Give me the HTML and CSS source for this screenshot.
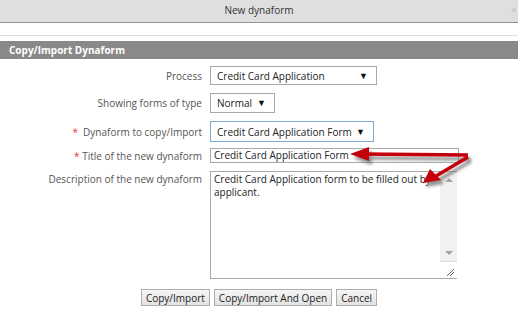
FILE: index.html
```html
<!DOCTYPE html>
<html lang="en">
<head>
  <meta charset="UTF-8" />
  <title>New dynaform</title>
  <link rel="stylesheet" href="styles.css">
</head>
<body>
  <div class="window">
    <div class="titlebar">
      New dynaform
      <span class="close">×</span>
    </div>
    <div class="spacer"></div>
    <div class="section-title">Copy/Import Dynaform</div>

    <div class="form">
      <div class="row row-process">
        <label class="label">Process</label>
        <div class="select select-process">
          <span>Credit Card Application</span>
          <span class="caret">▼</span>
        </div>
      </div>

      <div class="row row-type">
        <label class="label">Showing forms of type</label>
        <div class="select select-type">
          <span>Normal</span>
          <span class="caret">▼</span>
        </div>
      </div>

      <div class="row row-dyna">
        <label class="label"><span class="req">*</span>&nbsp; Dynaform to copy/Import</label>
        <div class="select select-dyna focus">
          <span>Credit Card Application Form</span>
          <span class="caret">▼</span>
        </div>
      </div>

      <div class="row row-title">
        <label class="label"><span class="req">*</span> Title of the new dynaform</label>
        <div class="input">Credit Card Application Form</div>
      </div>

      <div class="row row-desc">
        <label class="label">Description of the new dynaform</label>
        <div class="textarea">
          <div class="textarea-text">Credit Card Application form to be filled out by applicant.</div>
          <div class="scrollbar">
            <span class="arrow-up"></span>
            <span class="arrow-down"></span>
            <span class="grip">
              <svg width="17" height="17" viewBox="0 0 17 17">
                <path d="M7 14 L14 7 M10 14 L14 10" stroke="#666" stroke-width="1" fill="none"/>
              </svg>
            </span>
          </div>
        </div>
      </div>

      <div class="actions">
        <button>Copy/Import</button>
        <button>Copy/Import And Open</button>
        <button>Cancel</button>
      </div>
    </div>

    <svg class="callouts" width="518" height="309" viewBox="0 0 518 309">
      <defs>
        <filter id="shadow" x="-20%" y="-50%" width="140%" height="200%">
          <feGaussianBlur stdDeviation="1.6"/>
        </filter>
      </defs>
      <g fill="#7a7a7a" stroke="#7a7a7a" filter="url(#shadow)" opacity="0.8" transform="translate(3,4)">
        <line x1="468" y1="155" x2="362" y2="154" stroke-width="3.5"/>
        <polygon points="350,154 369,147 369,161" stroke="none"/>
        <line x1="468" y1="157" x2="436" y2="176" stroke-width="3.5"/>
        <polygon points="423,183 430,169 441,180" stroke="none"/>
      </g>
      <g fill="#c4000a" stroke="#c4000a">
        <line x1="468" y1="155" x2="362" y2="154" stroke-width="3.5"/>
        <polygon points="350,154 369,147 369,161" stroke="none"/>
        <line x1="468" y1="157" x2="436" y2="176" stroke-width="3.5"/>
        <polygon points="423,183 430,169 441,180" stroke="none"/>
      </g>
    </svg>
  </div>
</body>
</html>
```

FILE: styles.css
```css
body {
  margin: 0;
  font-family: "Open Sans", "Liberation Sans", sans-serif;
  font-size: 10px;
  color: #555;
  background: #fff;
}
.window {
  position: relative;
  width: 518px;
  height: 309px;
  overflow: hidden;
}
.titlebar {
  position: relative;
  height: 22px;
  line-height: 21px;
  background: #dfdfdf;
  border-bottom: 1px solid #8f9596;
  text-align: center;
  color: #333;
}
.close {
  position: absolute;
  right: 1px;
  top: 0;
  color: #c0c0c0;
  font-size: 10px;
}
.spacer {
  height: 12px;
  border-bottom: 1px solid #dcdcdc;
  margin-bottom: 5px;
}
.section-title {
  height: 18px;
  line-height: 18px;
  background: #898989;
  color: #fff;
  font-weight: bold;
  padding-left: 9px;
}
.form {
  display: flex;
  flex-direction: column;
}
.row {
  display: flex;
  align-items: center;
  column-gap: 8px;
  line-height: 14px;
}
.label {
  width: 202px;
  flex: none;
  text-align: right;
}
.req {
  color: #e23a3a;
}
.row-process { margin-top: 7px; }
.row-type { margin-top: 8px; }
.row-dyna { margin-top: 8px; }
.row-title { margin-top: 6px; }
.row-desc { margin-top: 8px; align-items: flex-start; }
.row-desc .label { padding-top: 1px; }

.select {
  display: flex;
  align-items: center;
  justify-content: space-between;
  box-sizing: border-box;
  height: 19px;
  padding: 0 8px 0 6px;
  border: 1px solid #a9a9a9;
  background: #fff;
  color: #222;
  white-space: nowrap;
}
.select-process { width: 167px; }
.select-type { width: 65px; height: 20px; }
.select-dyna { width: 164px; height: 21px; }
.focus {
  border-color: #7fa7d8;
}
.caret {
  font-size: 9px;
  color: #111;
}
.input {
  box-sizing: border-box;
  width: 249px;
  height: 15px;
  line-height: 13px;
  padding-left: 3px;
  border: 1px solid #a9a9a9;
  color: #222;
}
.textarea {
  display: flex;
  box-sizing: border-box;
  width: 247px;
  height: 108px;
  border: 1px solid #a9a9a9;
  border-right: none;
}
.textarea-text {
  flex: 1;
  padding: 1px 3px;
  color: #222;
  line-height: 13px;
}
.scrollbar {
  position: relative;
  width: 17px;
  background: #f1f1f1;
  display: flex;
  flex-direction: column;
  align-items: center;
}
.arrow-up,
.arrow-down {
  width: 0;
  height: 0;
  border-left: 4px solid transparent;
  border-right: 4px solid transparent;
}
.arrow-up {
  margin-top: 6px;
  border-bottom: 4px solid #a3a3a3;
}
.arrow-down {
  margin-top: auto;
  margin-bottom: 6px;
  border-top: 4px solid #a3a3a3;
}
.grip {
  width: 17px;
  height: 17px;
  background: #fff;
  border-top: 1px solid #dcdcdc;
  box-sizing: border-box;
}
.grip svg { display: block; }

.actions {
  display: flex;
  justify-content: center;
  gap: 4px;
  margin-top: 10px;
}
button {
  font-family: inherit;
  font-size: 10px;
  color: #222;
  height: 17px;
  padding: 0 4px;
  border: 1px solid #adadad;
  background: linear-gradient(#f6f6f6, #e2e2e2);
  cursor: pointer;
}
.callouts {
  position: absolute;
  left: 0;
  top: 0;
  pointer-events: none;
}
```
